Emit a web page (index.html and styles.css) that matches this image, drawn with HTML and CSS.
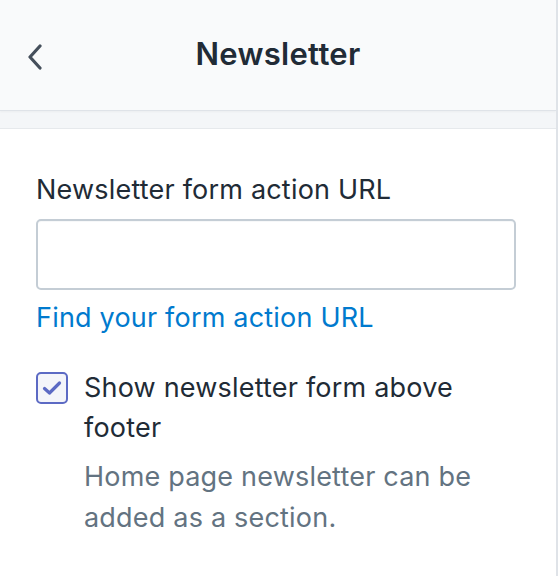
FILE: index.html
```html
<!DOCTYPE html>
<html>
<head>
<meta charset="utf-8">
<link rel="stylesheet" href="styles.css">
</head>
<body>
<div class="panel">
  <header class="header">
    <div class="back">
      <svg width="16" height="26" viewBox="0 0 16 26"><path d="M13 2 L3 13 L13 24" fill="none" stroke="#454f5b" stroke-width="3.2" stroke-linecap="round" stroke-linejoin="round"/></svg>
    </div>
    <h1 class="title">Newsletter</h1>
    <div></div>
  </header>
  <div class="band"></div>
  <main class="content">
    <label class="label">Newsletter form action URL</label>
    <div class="input"></div>
    <a class="link">Find your form action URL</a>
    <div class="check-row">
      <span class="box">
        <svg width="20" height="16" viewBox="0 0 20 16"><path d="M2.5 8.5 L7.5 13 L17.5 3" fill="none" stroke="#5c6ac4" stroke-width="3.2" stroke-linecap="round" stroke-linejoin="round"/></svg>
      </span>
      <div class="check-text">
        <div class="check-label">Show newsletter form above footer</div>
        <div class="help">Home page newsletter can be added as a section.</div>
      </div>
    </div>
  </main>
</div>
</body>
</html>
```

FILE: styles.css
```css
html, body {
  margin: 0;
  padding: 0;
  background: #ffffff;
}
body {
  font-family: Inter, "Noto Sans", sans-serif;
  color: #212b36;
}
.panel {
  width: 558px;
  height: 576px;
  box-sizing: border-box;
  border-right: 2px solid #dfe3e8;
  overflow: hidden;
}
.header {
  height: 110px;
  box-sizing: border-box;
  background: #f9fafb;
  display: grid;
  grid-template-columns: 1fr auto 1fr;
  align-items: center;
  box-shadow: 0 1px 0 #dfe3e8, 0 2px 2px rgba(0,0,0,0.04);
  position: relative;
  z-index: 1;
}
.back {
  padding-left: 27px;
  padding-top: 4px;
  display: flex;
  align-items: center;
}
.title {
  margin: 0;
  font-size: 31px;
  font-weight: 600;
  color: #212b36;
  letter-spacing: 0.3px;
  padding-bottom: 4px;
}
.band {
  height: 18px;
  background: #f4f6f8;
  border-bottom: 1px solid #e6e9ec;
}
.content {
  padding: 41px 40px 0 36px;
  letter-spacing: 0.2px;
}
.label {
  display: block;
  font-size: 27px;
  line-height: 40px;
  color: #212b36;
}
.input {
  margin-top: 9px;
  height: 71px;
  box-sizing: border-box;
  border: 2px solid #c4cdd5;
  border-radius: 5px;
  background: #fff;
  box-shadow: inset 0 1px 0 rgba(99,115,129,0.05);
}
.link {
  display: block;
  margin-top: 8px;
  font-size: 27px;
  line-height: 40px;
  color: #007ace;
}
.check-row {
  margin-top: 30px;
  display: flex;
  gap: 16px;
  align-items: flex-start;
}
.box {
  flex: none;
  margin-top: 4px;
  width: 32px;
  height: 32px;
  box-sizing: border-box;
  border: 2px solid #5c6ac4;
  border-radius: 5px;
  background: #f4f5fa;
  display: flex;
  align-items: center;
  justify-content: center;
}
.check-label {
  font-size: 27px;
  line-height: 40px;
  color: #212b36;
}
.help {
  margin-top: 8px;
  font-size: 27px;
  line-height: 41px;
  color: #637381;
}
```
